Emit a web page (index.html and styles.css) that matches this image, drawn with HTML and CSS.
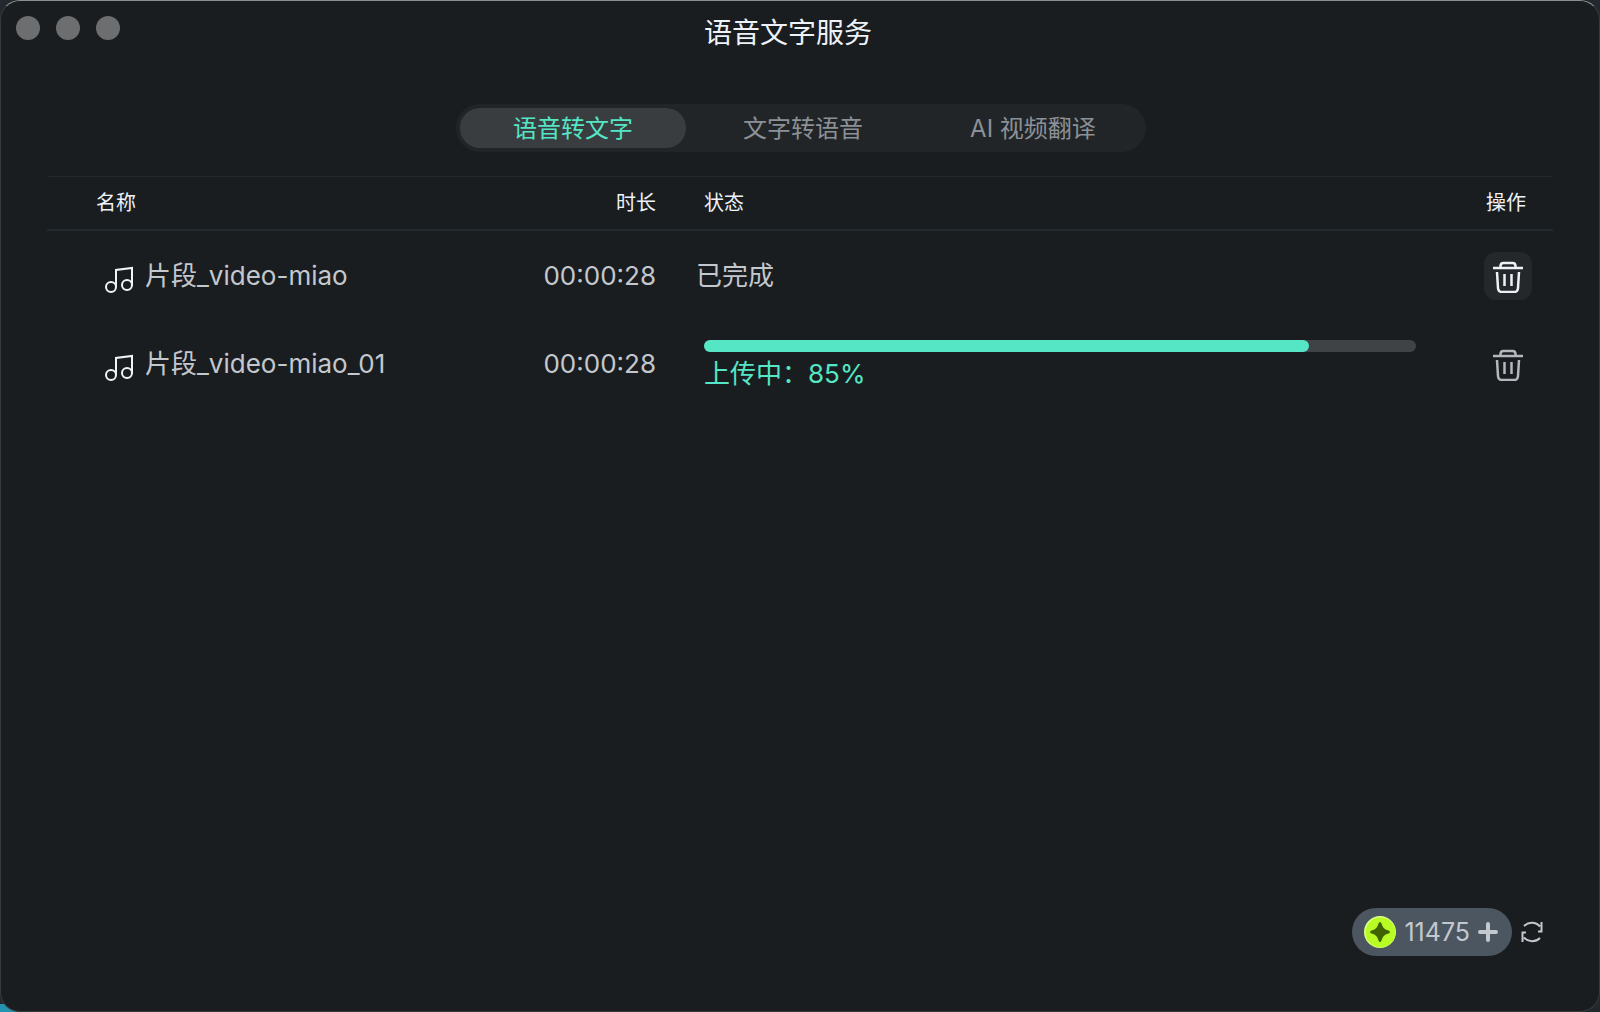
FILE: index.html
```html
<!DOCTYPE html>
<html lang="zh-CN">
<head>
    <meta charset="UTF-8">
    <meta name="viewport" content="width=device-width, initial-scale=1.0">
    <title>语音文字服务</title>
    <link rel="stylesheet" href="styles.css">
</head>
<body>
    <svg class="symbols" aria-hidden="true">
        <symbol id="music" viewBox="0 0 30 28">
            <circle cx="7" cy="21" r="5" />
            <circle cx="23" cy="19" r="5" />
            <path d="M12 21V4L28 2V19" />
        </symbol>
        <symbol id="trash" viewBox="0 0 30 32">
            <path stroke-width="2.5" d="M0 7H30M7.500 6V5Q7.500 2 10.500 2H19.500Q22.500 2 22.500 5V6M4 11L5 27Q5.300 31 9 31H21Q24.700 31 25 27L26 11M11.500 13V25M18.500 13V25" />
        </symbol>
    </svg>

    <div class="window">
        <header class="title-bar">
            <div class="window-buttons">
                <button class="window-button" aria-label="关闭"></button>
                <button class="window-button" aria-label="最小化"></button>
                <button class="window-button" aria-label="缩放"></button>
            </div>
            <h1>语音文字服务</h1>
        </header>

        <nav class="tabs">
            <button class="tab active">语音转文字</button>
            <button class="tab">文字转语音</button>
            <button class="tab">AI 视频翻译</button>
        </nav>

        <main class="content">
            <table class="task-table">
                <thead>
                    <tr>
                        <th class="name">名称</th>
                        <th class="duration">时长</th>
                        <th class="status">状态</th>
                        <th class="action">操作</th>
                    </tr>
                </thead>
                <tbody>
                    <tr>
                        <td class="name">
                            <div class="file">
                                <svg class="music-icon"><use href="#music" /></svg>
                                <span>片段_video-miao</span>
                            </div>
                        </td>
                        <td class="duration">00:00:28</td>
                        <td class="status done">已完成</td>
                        <td class="action">
                            <button class="delete-button selected" aria-label="删除">
                                <svg class="trash-icon"><use href="#trash" /></svg>
                            </button>
                        </td>
                    </tr>
                    <tr>
                        <td class="name">
                            <div class="file">
                                <svg class="music-icon"><use href="#music" /></svg>
                                <span>片段_video-miao_01</span>
                            </div>
                        </td>
                        <td class="duration">00:00:28</td>
                        <td class="status uploading">
                            <div class="progress">
                                <div class="progress-value" style="width: 85%;"></div>
                            </div>
                            <div class="progress-text">上传中：85%</div>
                        </td>
                        <td class="action">
                            <button class="delete-button" aria-label="删除">
                                <svg class="trash-icon"><use href="#trash" /></svg>
                            </button>
                        </td>
                    </tr>
                </tbody>
            </table>
        </main>

        <footer class="bottom-bar">
            <button class="credits">
                <svg class="coin-icon" viewBox="0 0 32 32">
                    <circle cx="16" cy="16" r="16" fill="#dcff85" />
                    <circle cx="16.500" cy="16.500" r="15" fill="#b9fb24" />
                    <path d="M16 6Q17 6 17.500 7.500C19 12 20 13 24.500 14.500Q26 15 26 16Q26 17 24.500 17.500C20 19 19 20 17.500 24.500Q17 26 16 26Q15 26 14.500 24.500C13 20 12 19 7.500 17.500Q6 17 6 16Q6 15 7.500 14.500C12 13 13 12 14.500 7.500Q15 6 16 6Z" fill="#3f6304" />
                </svg>
                <span>11475</span>
                <svg class="plus-icon" viewBox="0 0 20 20"><path d="M10 2V18M2 10H18" /></svg>
            </button>
            <button class="refresh" aria-label="刷新">
                <svg class="refresh-icon" viewBox="0 0 22 22">
                    <path d="M3 5A11 11 0 0 1 19 5.500M20.500 1V10.500H17M19 17A11 11 0 0 1 3 16.500M1.500 21V11.500H5" />
                </svg>
            </button>
        </footer>
    </div>
</body>
</html>
```
FILE: styles.css
```css
* {
    box-sizing: border-box;
}

body {
    margin: 0;
    font-family: Inter, "Noto Sans CJK SC", sans-serif;
    font-size: 26px;
    color: #c3c8cf;
    background: linear-gradient(#2493ad, #2493ad) left bottom / 20px 8px no-repeat #23282e;
}

button {
    padding: 0;
    border: none;
    background: none;
    color: inherit;
    font-family: inherit;
    cursor: pointer;
}

svg {
    display: block;
    fill: none;
    stroke: currentColor;
}

.symbols {
    position: absolute;
    width: 0;
    height: 0;
}

.window {
    min-height: 100vh;
    display: flex;
    flex-direction: column;
    background-color: #1a1d1f;
    border: 1px solid #363a3b;
    border-top-color: #8a9092;
    border-radius: 20px;
}

.title-bar {
    display: grid;
    grid-template-columns: 1fr auto 1fr;
    height: 64px;
    padding: 0 39px 0 15px;
}

.window-buttons {
    display: flex;
    gap: 16px;
    padding-top: 15px;
}

.window-button {
    width: 24px;
    height: 24px;
    border-radius: 50%;
    background-color: #6d6e6f;
}

h1 {
    margin: 0;
    color: #edf2f8;
    font-size: 28px;
    font-weight: 400;
    line-height: 64px;
}

.tabs {
    display: flex;
    gap: 4px;
    align-self: center;
    margin: 39px 0 0 2px;
    padding: 4px 0 4px 4px;
    border-radius: 24px;
    background-color: #222527;
}

.tab {
    width: 226px;
    height: 40px;
    padding-top: 2px;
    border-radius: 20px;
    color: #8c9197;
    font-size: 24px;
    line-height: 38px;
}

.tab.active {
    background-color: #393d40;
    color: #55e6c5;
}

.content {
    flex: 1;
    padding: 24px 46px 0;
}

.task-table {
    width: 100%;
    table-layout: fixed;
    border-collapse: separate;
    border-spacing: 0;
}

th {
    height: 55px;
    padding: 0;
    border-top: 1px solid #22292f;
    border-bottom: 2px solid #22292f;
    color: #edf2f8;
    font-size: 20px;
    font-weight: 400;
    line-height: 30px;
    text-align: left;
}

td {
    height: 88px;
    padding: 2px 0 0;
    line-height: 32px;
}

.name {
    width: 440px;
    padding-left: 49px;
}

.duration {
    width: 169px;
    text-align: right;
}

.status {
    padding-left: 48px;
    padding-right: 47px;
}

.status.done {
    padding-left: 40px;
}

.status.uploading {
    padding-top: 10px;
}

.action {
    width: 90px;
    text-align: center;
}

th.action {
    padding-right: 4px;
}

.file {
    display: flex;
    align-items: center;
    gap: 11px;
    padding-left: 8px;
}

.music-icon {
    width: 30px;
    height: 28px;
    margin-top: 8px;
    color: #edf5f8;
    stroke-width: 2;
}

.delete-button {
    display: flex;
    align-items: center;
    justify-content: center;
    width: 48px;
    height: 48px;
    margin: 0 auto;
    padding-top: 2px;
    border-radius: 12px;
    color: #b2b8bd;
}

.delete-button.selected {
    background-color: #24282b;
    color: #edf2f8;
}

.trash-icon {
    width: 30px;
    height: 32px;
}

.progress {
    height: 12px;
    border-radius: 6px;
    background-color: #404345;
}

.progress-value {
    height: 100%;
    border-radius: 6px;
    background-color: #55e6c5;
}

.progress-text {
    color: #55e6c5;
    line-height: 44px;
}

.bottom-bar {
    display: flex;
    align-items: center;
    justify-content: flex-end;
    gap: 9px;
    padding: 0 56px 55px;
}

.credits {
    display: flex;
    align-items: center;
    gap: 8px;
    height: 48px;
    padding: 0 14px 0 12px;
    border-radius: 24px;
    background-color: #4c5661;
    color: #c3c8cf;
    font-size: 25px;
}

.coin-icon {
    width: 32px;
    height: 32px;
    stroke: none;
}

.plus-icon {
    width: 20px;
    height: 20px;
    stroke-width: 4;
    stroke-linecap: round;
}

.refresh-icon {
    width: 22px;
    height: 22px;
    stroke-width: 2;
}
```
